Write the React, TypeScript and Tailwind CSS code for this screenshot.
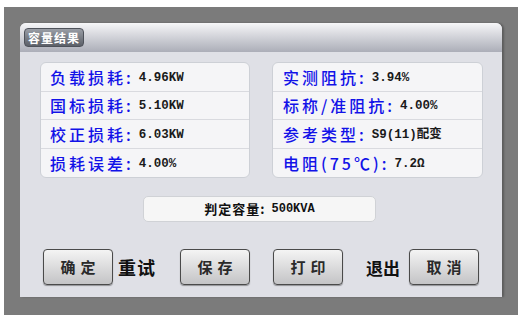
import React from "react";

const left = [
  ["负载损耗:", "4.96KW"],
  ["国标损耗:", "5.10KW"],
  ["校正损耗:", "6.03KW"],
  ["损耗误差:", "4.00%"],
];

const right = [
  ["实测阻抗:", "3.94%"],
  ["标称/准阻抗:", "4.00%"],
  ["参考类型:", "S9(11)配变"],
  ["电阻(75℃):", "7.2Ω"],
];

const cjk = { fontFamily: '"Noto Sans CJK SC", sans-serif' };
const mono = { fontFamily: '"Liberation Mono", "Noto Sans CJK SC", monospace' };

function Card({ rows, pad }: { rows: string[][]; pad: string }) {
  return (
    <div className="flex flex-col rounded-[6px] border border-[#cdd0d6] bg-[#f5f5f7] overflow-hidden">
      {rows.map(([label, value], i) => (
        <div
          key={label}
          className={`flex h-[28.5px] items-center ${pad} ${i < rows.length - 1 ? "border-b border-[#d9dadf]" : ""}`}
        >
          <span className="text-[16px] font-medium leading-none tracking-[3px] text-[#1212e8]" style={cjk}>
            {label}
          </span>
          <span className="ml-[5px] mt-[2px] text-[12.5px] font-bold leading-none text-[#1a1a1a]" style={mono}>
            {value}
          </span>
        </div>
      ))}
    </div>
  );
}

function Btn({ children }: { children: React.ReactNode }) {
  return (
    <button
      className="flex h-[36px] w-[70px] items-center justify-center rounded-[4px] border border-[#4a4a4a] bg-gradient-to-b from-[#f4f4f4] to-[#c4c4c6] pl-[5px] text-[15px] font-bold tracking-[5px] text-[#2a2a2a] shadow-[0_1px_1px_rgba(0,0,0,0.35)]"
      style={cjk}
    >
      {children}
    </button>
  );
}

export default function App() {
  return (
    <div className="h-[319px] w-[520px] bg-white pb-[4px] pl-[4px] pr-[2px] pt-[7px]">
      <div className="flex h-full w-full flex-col bg-[#7b7b7b] pb-[18px] pl-[16px] pr-[16px] pt-[16px]">
        <div className="flex h-[274px] w-[482px] flex-col overflow-hidden rounded-t-[6px] bg-[#dfe0e6] shadow-[2px_0_2px_rgba(0,0,0,0.25)]">
          <div className="h-[29px] bg-gradient-to-b from-[#f6f6f8] to-[#acaeb8] pl-[4px] pt-[5px]">
            <div
              className="flex h-[19px] w-[60px] items-center justify-center rounded-[4px] border border-[#4e525a] bg-gradient-to-b from-[#9a9ea6] to-[#5c6068] text-[12px] font-bold tracking-[1px] text-white"
              style={cjk}
            >
              容量结果
            </div>
          </div>
          <div className="flex gap-[22px] pl-[20px] pt-[10px]">
            <div className="w-[210px]">
              <Card rows={left} pad="pl-[9px]" />
            </div>
            <div className="w-[211px]">
              <Card rows={right} pad="pl-[10px]" />
            </div>
          </div>
          <div className="mt-[18px] flex pl-[123px]">
            <div className="flex h-[26px] w-[233px] items-center justify-center rounded-[5px] border border-[#d0d2d6] bg-[#f6f6f6]">
              <span className="text-[13px] font-bold tracking-[1px] text-[#111]" style={cjk}>
                判定容量:
              </span>
              <span className="ml-[6px] text-[12px] font-bold text-[#111]" style={mono}>
                500KVA
              </span>
            </div>
          </div>
          <div className="mt-[27px] flex items-center pl-[23px]">
            <Btn>确定</Btn>
            <span className="ml-[5px] w-[39px] text-[18px] font-bold leading-none tracking-[1px] text-[#111]" style={cjk}>
              重试
            </span>
            <div className="ml-[23px]">
              <Btn>保存</Btn>
            </div>
            <div className="ml-[23px]">
              <Btn>打印</Btn>
            </div>
            <span className="ml-[23px] w-[34px] text-[17px] font-bold leading-none text-[#111]" style={cjk}>
              退出
            </span>
            <div className="ml-[9px]">
              <Btn>取消</Btn>
            </div>
          </div>
        </div>
      </div>
    </div>
  );
}
